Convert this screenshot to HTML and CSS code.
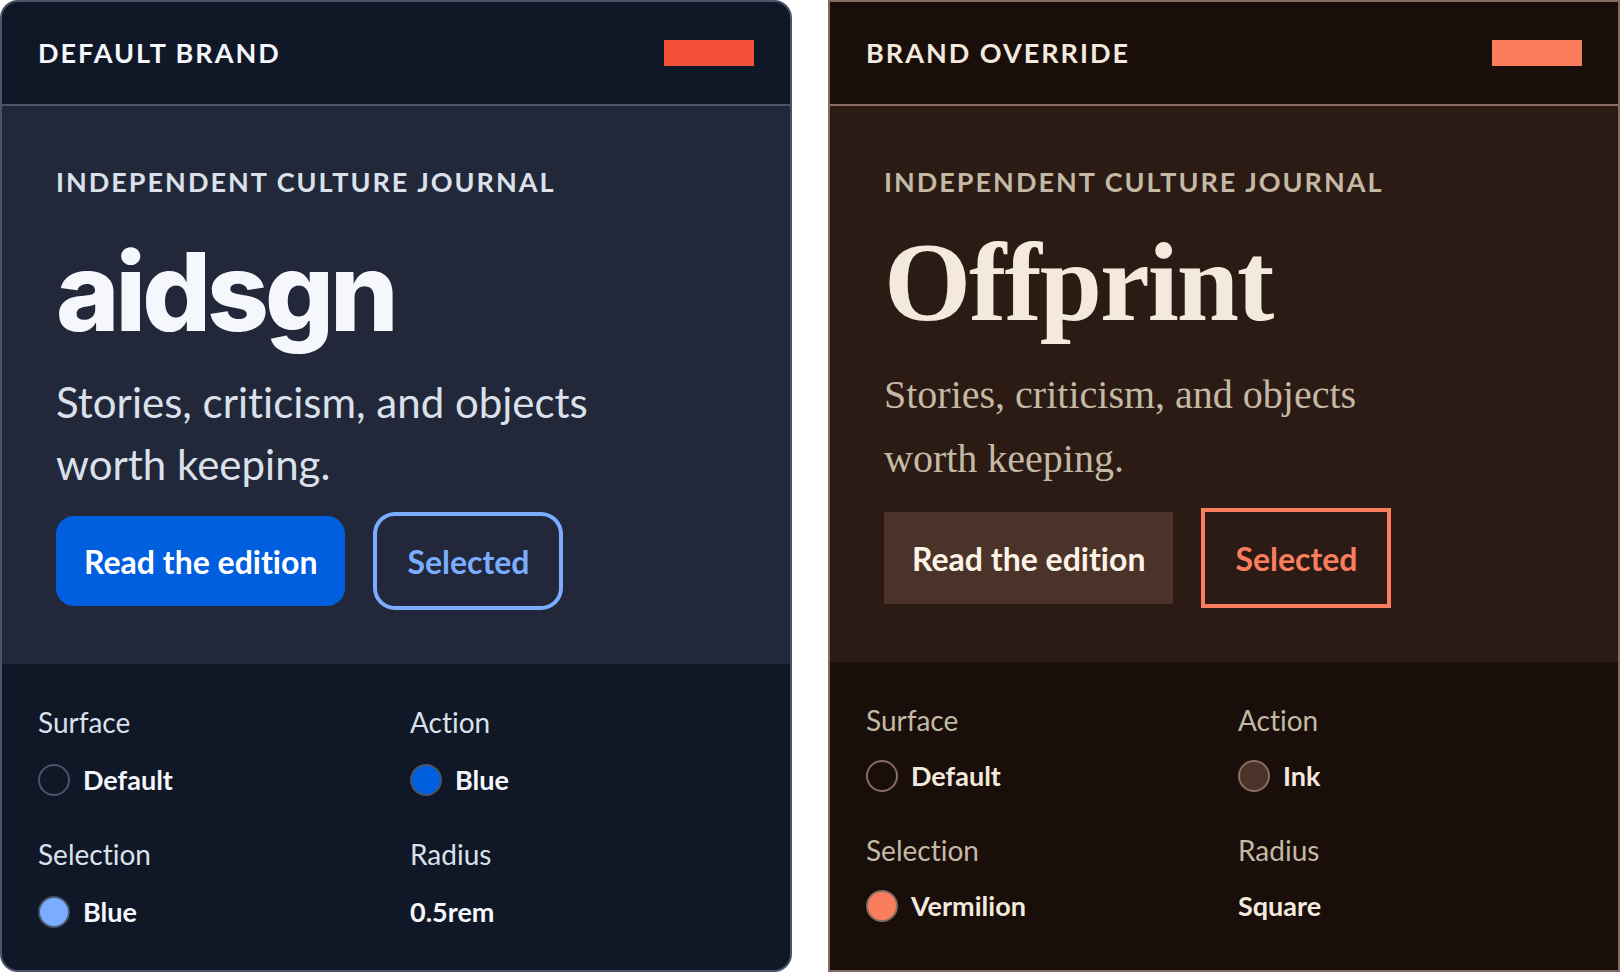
FILE: index.html
```html
<!DOCTYPE html>
<html lang="en">
<head>
<meta charset="utf-8">
<meta name="viewport" content="width=device-width, initial-scale=1">
<title>Brand comparison</title>
<link rel="stylesheet" href="styles.css">
</head>
<body>
<main class="comparison">
  <article class="card card-default">
    <header class="card-header">
      <h2 class="card-title">DEFAULT BRAND</h2>
      <span class="accent"></span>
    </header>
    <section class="hero">
      <p class="eyebrow">INDEPENDENT CULTURE JOURNAL</p>
      <h1 class="wordmark">aidsgn</h1>
      <p class="tagline">Stories, criticism, and objects worth keeping.</p>
      <div class="actions">
        <button class="button primary" type="button">Read the edition</button>
        <button class="button selected" type="button" aria-pressed="true">Selected</button>
      </div>
    </section>
    <dl class="tokens">
      <div class="token"><dt>Surface</dt><dd><span class="swatch"></span>Default</dd></div>
      <div class="token"><dt>Action</dt><dd><span class="swatch swatch-action"></span>Blue</dd></div>
      <div class="token"><dt>Selection</dt><dd><span class="swatch swatch-selection"></span>Blue</dd></div>
      <div class="token"><dt>Radius</dt><dd>0.5rem</dd></div>
    </dl>
  </article>
  <article class="card card-override">
    <header class="card-header">
      <h2 class="card-title">BRAND OVERRIDE</h2>
      <span class="accent"></span>
    </header>
    <section class="hero">
      <p class="eyebrow">INDEPENDENT CULTURE JOURNAL</p>
      <h1 class="wordmark">Offprint</h1>
      <p class="tagline">Stories, criticism, and objects worth keeping.</p>
      <div class="actions">
        <button class="button primary" type="button">Read the edition</button>
        <button class="button selected" type="button" aria-pressed="true">Selected</button>
      </div>
    </section>
    <dl class="tokens">
      <div class="token"><dt>Surface</dt><dd><span class="swatch"></span>Default</dd></div>
      <div class="token"><dt>Action</dt><dd><span class="swatch swatch-action"></span>Ink</dd></div>
      <div class="token"><dt>Selection</dt><dd><span class="swatch swatch-selection"></span>Vermilion</dd></div>
      <div class="token"><dt>Radius</dt><dd>Square</dd></div>
    </dl>
  </article>
</main>
</body>
</html>
```
FILE: styles.css
```css
* {
  box-sizing: border-box;
}

body,
h1,
h2,
p,
dl,
dd {
  margin: 0;
}

body {
  background: #ffffff;
  font-family: Lato, "Open Sans", sans-serif;
  font-variant-ligatures: none;
}

.comparison {
  display: grid;
  grid-template-columns: 1fr 1fr;
  gap: 36px;
}

.card {
  display: flex;
  flex-direction: column;
  overflow: hidden;
  border: 2px solid var(--border);
  border-radius: var(--radius);
  background: var(--surface);
  color: var(--text);
}

.card-default {
  --surface: #101726;
  --raised: #222839;
  --border: #4a546a;
  --text: #f5f7fc;
  --muted: #dbe1eb;
  --accent: #f25138;
  --action: #005fde;
  --on-action: #ffffff;
  --selection: #7aadff;
  --radius: 18px;
  --display-font: Inter, sans-serif;
  --display-size: 108px;
  --display-weight: 800;
  --display-line: 127px;
  --display-spacing: -4px;
  --display-margin: 24px 0 16px;
  --tagline-font: Lato, "Open Sans", sans-serif;
  --tagline-size: 42px;
  --tagline-line: 62px;
  --button-height: 90px;
  --token-gap: 14px;
}

.card-override {
  --surface: #1a0e0a;
  --raised: #2b1b14;
  --border: #876c61;
  --text: #f3eadd;
  --muted: #c3b9a4;
  --accent: #fa7e5e;
  --action: #4c3329;
  --on-action: #fdf4e7;
  --selection: #fa7e5e;
  --radius: 0;
  --display-font: "Liberation Serif", serif;
  --display-size: 112px;
  --display-weight: 700;
  --display-line: 119px;
  --display-spacing: -2px;
  --display-margin: 19px 0 21px;
  --tagline-font: "Liberation Serif", serif;
  --tagline-size: 40px;
  --tagline-line: 64px;
  --button-height: 92px;
  --token-gap: 12px;
}

.card-header {
  display: flex;
  align-items: center;
  justify-content: space-between;
  padding: 28px 36px;
  border-bottom: 2px solid var(--border);
}

.card-title,
.eyebrow {
  font-size: 27px;
  font-weight: 700;
  line-height: 46px;
  letter-spacing: 2px;
}

.accent {
  width: 90px;
  height: 26px;
  background: var(--accent);
}

.hero {
  padding: 54px 54px 58px;
  background: var(--raised);
}

.eyebrow {
  line-height: 44px;
  color: var(--muted);
}

.wordmark {
  margin: var(--display-margin);
  font-family: var(--display-font);
  font-size: var(--display-size);
  font-weight: var(--display-weight);
  line-height: var(--display-line);
  letter-spacing: var(--display-spacing);
}

.tagline {
  max-width: 560px;
  font-family: var(--tagline-font);
  font-size: var(--tagline-size);
  line-height: var(--tagline-line);
  color: var(--muted);
}

.actions {
  display: flex;
  gap: 32px;
  margin-top: 21px;
}

.button {
  min-width: 182px;
  height: var(--button-height);
  padding: 0 28px;
  border: 0;
  border-radius: var(--radius);
  font: inherit;
  font-size: 32px;
  font-weight: 700;
}

.primary {
  background: var(--action);
  color: var(--on-action);
}

.selected {
  background: transparent;
  color: var(--selection);
  box-shadow: 0 0 0 4px var(--selection);
}

.tokens {
  display: grid;
  grid-template-columns: 1fr 1fr;
  gap: 30px 28px;
  padding: 36px;
  font-size: 27px;
  line-height: 44px;
}

.token {
  display: flex;
  flex-direction: column;
  gap: var(--token-gap);
}

.token dt {
  font-size: 28px;
  color: var(--muted);
}

.token dd {
  display: flex;
  align-items: center;
  gap: 13px;
  font-weight: 700;
}

.swatch {
  width: 32px;
  height: 32px;
  border: 2px solid var(--border);
  border-radius: 50%;
}

.swatch-action {
  background: var(--action);
}

.swatch-selection {
  background: var(--selection);
}
```
